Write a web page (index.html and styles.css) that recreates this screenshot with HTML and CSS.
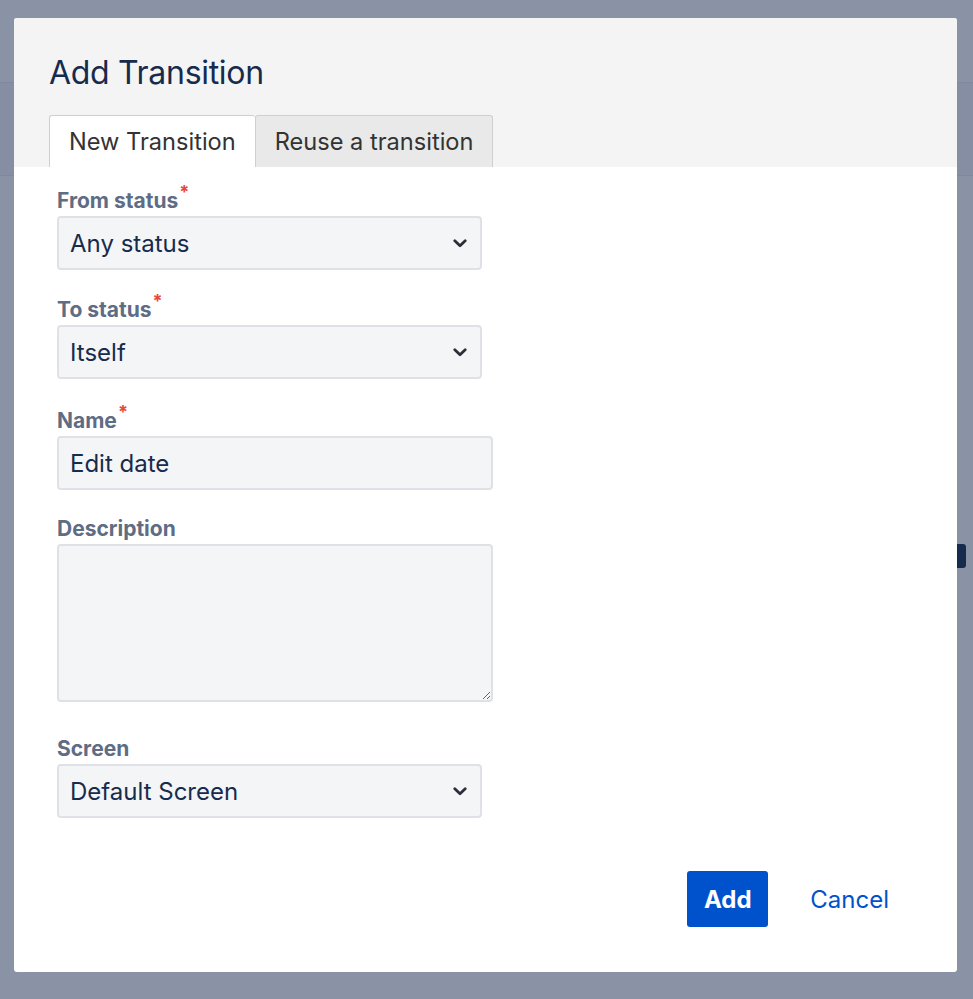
FILE: index.html
```html
<!DOCTYPE html>
<html lang="en">
<head>
<meta charset="utf-8">
<title>Add Transition</title>
<link rel="stylesheet" href="styles.css">
</head>
<body>
<div class="backdrop">
  <div class="page-band"></div>
  <div class="peek-button"></div>
</div>
<div class="modal" role="dialog" aria-labelledby="dlg-title">
  <div class="modal-header">
    <h2 class="modal-title" id="dlg-title">Add Transition</h2>
    <div class="tabs">
      <div class="tab tab-active">New Transition</div>
      <div class="tab">Reuse a transition</div>
    </div>
  </div>
  <form class="modal-body">
    <div class="field">
      <label class="field-label">From status<span class="req">*</span></label>
      <div class="select-wrap">
        <select class="control select"><option>Any status</option></select>
        <svg class="chevron" width="14" height="9" viewBox="0 0 14 9"><path d="M1.8 1.8 L7 6.8 L12.2 1.8" fill="none" stroke="#2b2f38" stroke-width="2.8" stroke-linecap="round" stroke-linejoin="round"/></svg>
      </div>
    </div>
    <div class="field field-before-name">
      <label class="field-label">To status<span class="req">*</span></label>
      <div class="select-wrap">
        <select class="control select"><option>Itself</option></select>
        <svg class="chevron" width="14" height="9" viewBox="0 0 14 9"><path d="M1.8 1.8 L7 6.8 L12.2 1.8" fill="none" stroke="#2b2f38" stroke-width="2.8" stroke-linecap="round" stroke-linejoin="round"/></svg>
      </div>
    </div>
    <div class="field field-name">
      <label class="field-label">Name<span class="req">*</span></label>
      <input class="control text-input" type="text" value="Edit date">
    </div>
    <div class="field field-desc">
      <label class="field-label">Description</label>
      <textarea class="control textarea"></textarea>
    </div>
    <div class="field">
      <label class="field-label">Screen</label>
      <div class="select-wrap">
        <select class="control select"><option>Default Screen</option></select>
        <svg class="chevron" width="14" height="9" viewBox="0 0 14 9"><path d="M1.8 1.8 L7 6.8 L12.2 1.8" fill="none" stroke="#2b2f38" stroke-width="2.8" stroke-linecap="round" stroke-linejoin="round"/></svg>
      </div>
    </div>
    <div class="actions">
      <button type="button" class="btn-primary">Add</button>
      <button type="button" class="btn-link">Cancel</button>
    </div>
  </form>
</div>
</body>
</html>
```

FILE: styles.css
```css
* { box-sizing: border-box; }
html, body { margin: 0; padding: 0; }
body {
  width: 973px;
  height: 999px;
  overflow: hidden;
  position: relative;
  background: #8a93a6;
  font-family: Inter, "Noto Sans", "Liberation Sans", sans-serif;
  color: #172b4d;
}
.backdrop { height: 999px; padding-top: 82px; }
.page-band {
  height: 94px;
  background: #858ea2;
  border-top: 1px solid #7f889c;
  border-bottom: 1px solid #7f889c;
}
.peek-button {
  position: absolute;
  left: 950px;
  top: 544px;
  width: 16px;
  height: 24px;
  background: #172b4d;
  border-radius: 3px;
}
.modal {
  position: absolute;
  left: 14px;
  top: 18px;
  width: 943px;
  height: 954px;
  background: #fff;
  border-radius: 3px;
  overflow: hidden;
  display: flex;
  flex-direction: column;
}
.modal-header {
  background: #f4f4f4;
  height: 149px;
  padding: 0 35px;
  display: flex;
  flex-direction: column;
}
.modal-title {
  margin: 35px 0 0;
  font-size: 32px;
  line-height: 40px;
  font-weight: 400;
  color: #172b4d;
  letter-spacing: -0.3px;
}
.tabs { display: flex; margin-top: auto; }
.tab {
  height: 52px;
  display: flex;
  align-items: center;
  padding: 0 19px;
  font-size: 23.6px;
  color: #333;
  background: #e9e9e9;
  border: 1px solid #cfcfcf;
  border-bottom: none;
  border-radius: 3px 3px 0 0;
}
.tab-active { background: #fff; border-right: none; }
.modal-body {
  flex: 1;
  padding: 22px 0 0 43px;
  display: flex;
  flex-direction: column;
}
.field { margin-bottom: 28px; }
.field-before-name { margin-bottom: 30px; }
.field-name { margin-bottom: 27px; }
.field-desc { margin-bottom: 35px; }
.field-label {
  display: block;
  font-size: 21px;
  line-height: 24px;
  font-weight: 700;
  color: #5e6c84;
  margin-bottom: 3px;
}
.req {
  color: #e5493a;
  font-size: 18px;
  font-weight: 700;
  vertical-align: 10px;
  line-height: 0;
  margin-left: 1px;
}
.control {
  display: block;
  font-family: inherit;
  font-size: 24px;
  color: #172b4d;
  background: #f4f5f7;
  border: 2px solid #dfe1e6;
  border-radius: 4px;
  padding: 0 11px;
  margin: 0;
  outline: none;
}
.select-wrap { position: relative; width: 425px; }
.select {
  width: 425px;
  height: 54px;
  appearance: none;
  -webkit-appearance: none;
}
.chevron {
  position: absolute;
  left: 396px;
  top: 23px;
  pointer-events: none;
}
.text-input { width: 436px; height: 54px; }
.textarea {
  width: 436px;
  height: 158px;
  resize: vertical;
  padding: 10px 12px;
}
.actions {
  display: flex;
  justify-content: flex-end;
  align-items: center;
  gap: 42px;
  margin-top: 25px;
  padding-right: 68px;
}
.btn-primary {
  font-family: inherit;
  width: 81px;
  height: 56px;
  background: #0052cc;
  color: #fff;
  font-size: 24px;
  font-weight: 700;
  border: none;
  border-radius: 3px;
  padding: 0;
}
.btn-link {
  font-family: inherit;
  background: none;
  border: none;
  padding: 0;
  color: #0052cc;
  font-size: 24px;
}
```
